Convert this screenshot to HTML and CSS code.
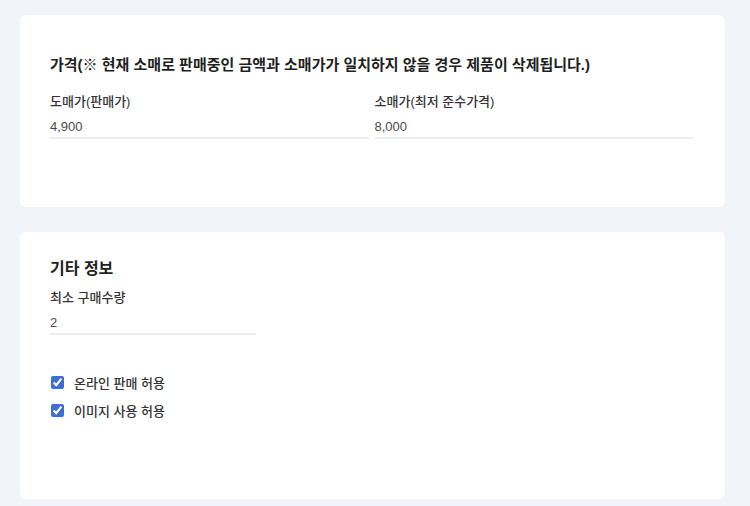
FILE: index.html
```html
<!DOCTYPE html>
<html lang="ko">
<head>
<meta charset="utf-8">
<link rel="stylesheet" href="styles.css">
</head>
<body>
<div class="page">
  <section class="card card-price">
    <h2 class="title">가격(※ 현재 소매로 판매중인 금액과 소매가가 일치하지 않을 경우 제품이 삭제됩니다.)</h2>
    <div class="fields">
      <div class="field">
        <div class="label">도매가(판매가)</div>
        <div class="value">4,900</div>
      </div>
      <div class="field">
        <div class="label">소매가(최저 준수가격)</div>
        <div class="value">8,000</div>
      </div>
    </div>
  </section>
  <section class="card card-etc">
    <h2 class="title title-lg">기타 정보</h2>
    <div class="field field-narrow">
      <div class="label">최소 구매수량</div>
      <div class="value">2</div>
    </div>
    <div class="checks">
      <label class="check"><input type="checkbox" checked><span>온라인 판매 허용</span></label>
      <label class="check"><input type="checkbox" checked><span>이미지 사용 허용</span></label>
    </div>
  </section>
</div>
</body>
</html>
```

FILE: styles.css
```css
* { box-sizing: border-box; }
html, body { margin: 0; padding: 0; }
body {
  background: #f1f4f9;
  font-family: "Liberation Sans", "Noto Sans CJK KR", sans-serif;
  color: #222;
  width: 750px;
  height: 506px;
  overflow: hidden;
}
.page {
  padding: 15px 25px 0 20px;
  display: flex;
  flex-direction: column;
  gap: 25px;
}
.card {
  background: #fff;
  border-radius: 6px;
  padding: 40px 32px 0 30px;
}
.card-price { height: 192px; }
.card-etc { height: 267px; padding-top: 26px; }
.title {
  margin: 0;
  font-size: 15px;
  line-height: 20px;
  font-weight: 700;
  color: #1f1f1f;
}
.title-lg {
  font-size: 16px;
  line-height: 22px;
}
.fields {
  margin-top: 18px;
  display: grid;
  grid-template-columns: 1fr 1fr;
  gap: 6px;
}
.field {
  display: flex;
  flex-direction: column;
  padding-bottom: 1px;
  border-bottom: 2px solid #eeeeee;
}
.card-etc .field { margin-top: 9px; }
.field-narrow { width: 206px; }
.label {
  font-size: 13px;
  line-height: 18px;
  font-weight: 500;
  color: #333;
}
.value {
  margin-top: 7px;
  font-size: 13px;
  line-height: 18px;
  color: #4a4a4a;
}
.card-etc .value { margin-top: 7px; }
.checks {
  margin-top: 37px;
  display: flex;
  flex-direction: column;
  gap: 8px;
}
.check {
  display: flex;
  align-items: center;
  gap: 10px;
  height: 20px;
  font-size: 13px;
  font-weight: 500;
  color: #333;
}
.check input {
  margin: 0 0 0 1px;
  width: 13px;
  height: 13px;
  accent-color: #3d6fd0;
}
```
